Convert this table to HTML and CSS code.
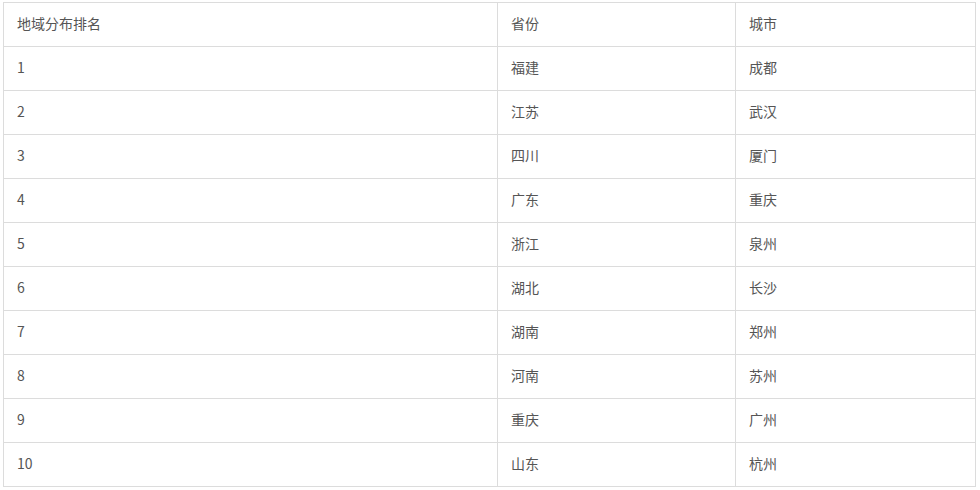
FILE: index.html
```html
<!DOCTYPE html>
<html lang="zh">
<head>
<meta charset="utf-8">
<link rel="stylesheet" href="styles.css">
</head>
<body>
<table class="rank">
<colgroup><col class="c1"><col class="c2"><col class="c3"></colgroup>
<thead>
<tr><th>地域分布排名</th><th>省份</th><th>城市</th></tr>
</thead>
<tbody>
<tr><td>1</td><td>福建</td><td>成都</td></tr>
<tr><td>2</td><td>江苏</td><td>武汉</td></tr>
<tr><td>3</td><td>四川</td><td>厦门</td></tr>
<tr><td>4</td><td>广东</td><td>重庆</td></tr>
<tr><td>5</td><td>浙江</td><td>泉州</td></tr>
<tr><td>6</td><td>湖北</td><td>长沙</td></tr>
<tr><td>7</td><td>湖南</td><td>郑州</td></tr>
<tr><td>8</td><td>河南</td><td>苏州</td></tr>
<tr><td>9</td><td>重庆</td><td>广州</td></tr>
<tr><td>10</td><td>山东</td><td>杭州</td></tr>
</tbody>
</table>
</body>
</html>
```
FILE: styles.css
```css
html, body { margin: 0; padding: 0; background: #fff; }
body { padding: 2px 0 0 3px; }
.rank {
  border-collapse: collapse;
  width: 972px;
  table-layout: fixed;
  font-family: "Microsoft YaHei", "Noto Sans CJK SC", "Noto Sans", sans-serif;
  font-size: 14px;
  color: #555;
}
.c1 { width: 494px; }
.c2 { width: 238px; }
.c3 { width: 240px; }
.rank th, .rank td {
  border: 1px solid #dcdcdc;
  height: 43px;
  padding: 0 0 4px 13px;
  text-align: left;
  font-weight: normal;
  vertical-align: middle;
  box-sizing: border-box;
}
.rank tr { height: 44px; }
```
